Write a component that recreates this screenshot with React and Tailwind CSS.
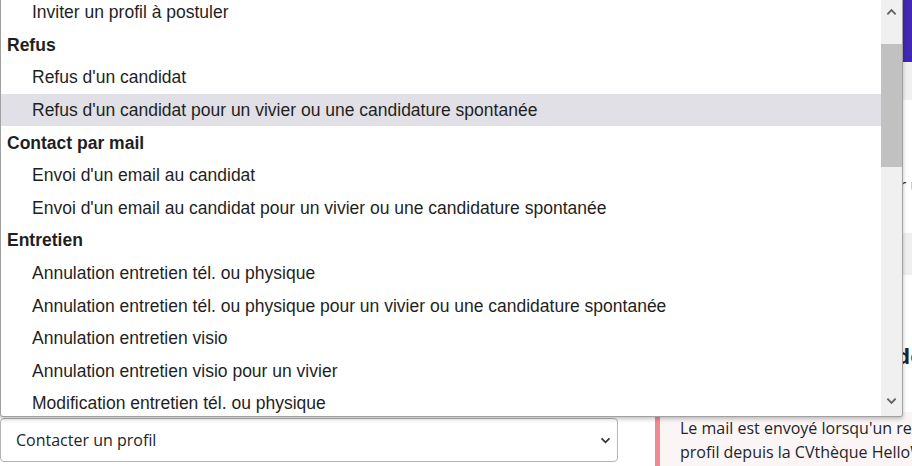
import React from 'react';

const groups = [
  { label: null, options: ['Inviter un profil à postuler'] },
  {
    label: 'Refus',
    options: [
      "Refus d'un candidat",
      "Refus d'un candidat pour un vivier ou une candidature spontanée",
    ],
  },
  {
    label: 'Contact par mail',
    options: [
      "Envoi d'un email au candidat",
      "Envoi d'un email au candidat pour un vivier ou une candidature spontanée",
    ],
  },
  {
    label: 'Entretien',
    options: [
      'Annulation entretien tél. ou physique',
      'Annulation entretien tél. ou physique pour un vivier ou une candidature spontanée',
      'Annulation entretien visio',
      'Annulation entretien visio pour un vivier',
      'Modification entretien tél. ou physique',
    ],
  },
];

const highlighted = "Refus d'un candidat pour un vivier ou une candidature spontanée";

function Chevron({ up = false, className = '' }) {
  return (
    <svg viewBox="0 0 12 8" className={className} fill="none">
      <path
        d={up ? 'M1.5 6.5 L6 2 L10.5 6.5' : 'M1.5 1.5 L6 6 L10.5 1.5'}
        stroke="currentColor"
        strokeWidth="2"
      />
    </svg>
  );
}

function OptionList() {
  return (
    <div className="absolute left-0 top-0 z-20 flex h-[417px] w-[903px] overflow-hidden rounded-b-[3px] border border-t-0 border-[#a0a0a0] bg-white shadow-[0_2px_4px_rgba(0,0,0,0.25)] font-['Liberation_Sans',Arial,sans-serif] text-[17.5px] text-[#1f1f1f]">
      <div className="flex-1 overflow-hidden">
        <div className="-mt-[4px]">
          {groups.map((g, i) => (
            <div key={i}>
              {g.label && (
                <div className="flex h-[32.6px] items-center pl-[6px] font-bold">{g.label}</div>
              )}
              {g.options.map((o) => (
                <div
                  key={o}
                  className={`flex h-[32.6px] items-center pl-[31px] whitespace-nowrap ${
                    o === highlighted ? 'bg-[#e1e0e6]' : ''
                  }`}
                >
                  {o}
                </div>
              ))}
            </div>
          ))}
        </div>
      </div>
      {/* scrollbar */}
      <div className="flex w-[21px] flex-col bg-[#f0f0f0]">
        <div className="flex h-[44px] items-center justify-center text-[#606060]">
          <Chevron up className="-mt-[20px] w-[11px] h-[8px]" />
        </div>
        <div className="h-[123px] bg-[#c1c1c1]" />
        <div className="flex-1" />
        <div className="flex h-[30px] items-center justify-center text-[#606060]">
          <Chevron className="w-[11px] h-[8px]" />
        </div>
      </div>
    </div>
  );
}

export default function App() {
  return (
    <div className="relative h-[466px] w-[912px] overflow-hidden bg-white font-['Open_Sans',sans-serif] text-[#212529]">
      <OptionList />

      <div className="flex h-full">
        {/* form column */}
        <div className="flex w-[655px] shrink-0 flex-col pt-[418px]">
          <div className="flex h-[44px] w-[618px] items-center justify-between rounded-[4px] border border-[#b5b5b5] bg-white pl-[15px] pr-[6px] text-[16px]">
            <span>Contacter un profil</span>
            <Chevron className="w-[11px] h-[7px] text-[#333]" />
          </div>
        </div>

        {/* side panel */}
        <div className="flex min-w-0 flex-1 flex-col overflow-hidden">
          <div className="h-[62px] shrink-0 bg-[#4128b4]" />
          <div className="h-[38px] shrink-0 bg-[#f0f0f0]" />
          <div className="flex h-[133px] shrink-0 items-center pl-[25px] pt-[36px] text-[16px] whitespace-nowrap">
            Modèle utilisé par défaut pour un n'importe quel
          </div>
          <div className="h-[42px] shrink-0 bg-[#efefef]" />
          <div className="flex h-[99px] shrink-0 items-end pb-[2px] pl-[25px] text-[22px] font-bold whitespace-nowrap">
            Modèle de mail par défaut
          </div>
          <div className="mt-[38px] flex flex-1 border-l-[5px] border-[#f08a93] bg-[#fcf5f5] pl-[20px] pt-[4px] text-[16px] leading-[24px]">
            <p className="whitespace-nowrap">
              Le mail est envoyé lorsqu'un recruteur contacte un
              <br />
              profil depuis la CVthèque HelloWork
            </p>
          </div>
        </div>
      </div>
    </div>
  );
}
